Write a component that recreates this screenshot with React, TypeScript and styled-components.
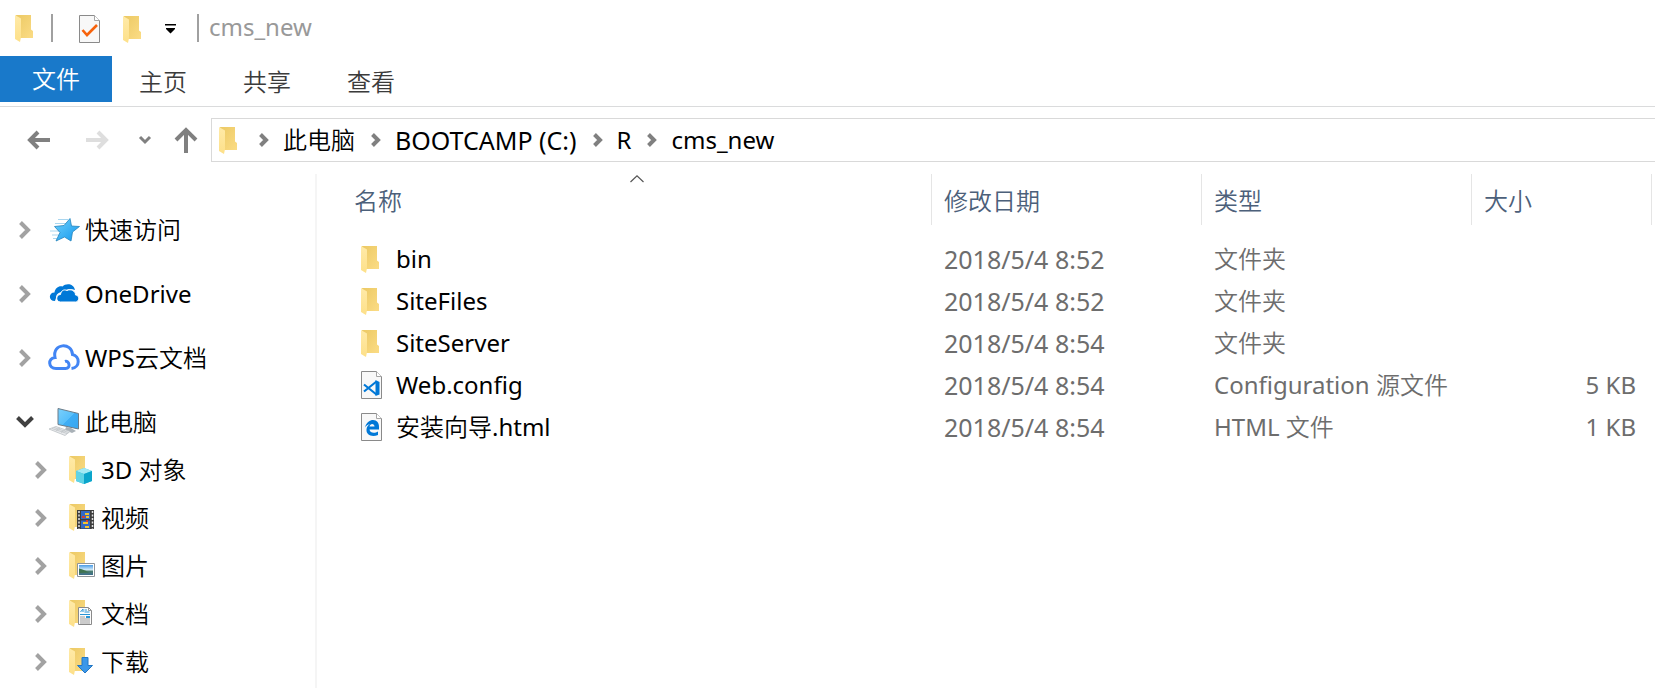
import React from "react";
import styled, { createGlobalStyle, css } from "styled-components";

const GlobalStyle = createGlobalStyle`
  * { box-sizing: border-box; }
  body {
    margin: 0;
    background: #fff;
    color: #000;
    font-family: "Noto Sans", "Noto Sans CJK SC DemiLight", "Noto Sans CJK SC", sans-serif;
    font-size: 24px;
    line-height: 32px;
  }
  button { padding: 0; border: 0; background: none; color: inherit; font: inherit; cursor: pointer; }
  a { color: inherit; text-decoration: none; }
  ul, ol { margin: 0; padding: 0; list-style: none; }
  svg { display: block; flex: none; overflow: visible; }
`;

const Window = styled.div`
  display: flex;
  flex-direction: column;
  min-height: 100vh;
`;

const TitleBar = styled.header`
  display: flex;
  align-items: center;
  height: 56px;
  padding-left: 15px;
`;

const QuickTools = styled.div`
  display: flex;
  align-items: center;
  gap: 22px;
  padding: 2px 20px 0 26px;
`;

const Divider = styled.span`
  width: 2px;
  height: 28px;
  margin-left: 17px;
  background: #a0a0a0;
  &:last-of-type { margin-left: 0; }
`;

const WindowTitle = styled.h1`
  margin: 0 0 2px 10px;
  color: #999;
  font-size: 24px;
  font-weight: 400;
`;

const Tabs = styled.nav`
  display: flex;
  height: 51px;
  border-bottom: 1px solid #dadbdc;
`;

const Tab = styled.button<{ $primary?: boolean }>`
  height: 50px;
  padding: 1px 29px 0 27px;
  color: #3b3b3b;
  font-weight: 350;
  ${(p) =>
    p.$primary &&
    css`
      height: 46px;
      padding: 0 32px;
      background: #1979ca;
      color: #fff;
    `}
`;

const NavBar = styled.div`
  display: flex;
  align-items: center;
  height: 55px;
  padding-top: 11px;
`;

const NavButtons = styled.div`
  display: flex;
  align-items: center;
  width: 211px;
  padding-left: 10px;
`;

const NavButton = styled.button<{ $width: number }>`
  display: flex;
  align-items: center;
  justify-content: center;
  width: ${(p) => p.$width}px;
  height: 44px;
`;

const AddressBar = styled.ol`
  display: flex;
  flex: 1;
  align-items: center;
  height: 44px;
  padding-left: 7px;
  border: 1px solid #d9d9d9;
  border-right: 0;
`;

const Crumb = styled.li<{ $root?: boolean }>`
  display: flex;
  align-items: center;
  gap: 14px;
  margin-right: ${(p) => (p.$root ? 21 : 16)}px;
  white-space: nowrap;
`;

const CrumbLink = styled.a<{ $drive?: boolean }>`
  font-size: ${(p) => (p.$drive ? 25 : 24)}px;
`;

const Body = styled.div`
  display: flex;
  flex: 1;
  padding-top: 12px;
`;

const Sidebar = styled.nav`
  flex: none;
  width: 317px;
  padding-top: 32px;
  border-right: 2px solid #f5f5f5;
`;

const Tree = styled.ul`
  display: flex;
  flex-direction: column;
  gap: 16px;
`;

const TreeRow = styled.div<{ $nested?: boolean }>`
  display: flex;
  align-items: center;
  gap: 13px;
  height: 48px;
  padding-left: ${(p) => (p.$nested ? 31 : 15)}px;
`;

const Expander = styled.button`
  display: flex;
  align-items: center;
  justify-content: center;
  width: 20px;
  height: 32px;
`;

const TreeLink = styled.a`
  display: flex;
  align-items: center;
  gap: 5px;
`;

const Main = styled.main`
  flex: 1;
  min-width: 0;
  padding: 0 3px 0 25px;
`;

const FileTable = styled.table`
  width: 100%;
  table-layout: fixed;
  border-collapse: collapse;
`;

const HeaderCell = styled.th<{ $width?: number }>`
  position: relative;
  width: ${(p) => (p.$width ? `${p.$width}px` : "auto")};
  padding: 0 0 13px;
  font-weight: 350;
`;

const HeaderButton = styled.button`
  display: block;
  width: 100%;
  height: 51px;
  padding: 2px 0 0 12px;
  border-right: 1px solid #e5e5e5;
  color: #4c607a;
  text-align: left;
`;

const SortMark = styled.span`
  position: absolute;
  top: 1px;
  left: calc(50% - 7px);
`;

const Cell = styled.td<{ $end?: boolean }>`
  height: 42px;
  padding: ${(p) => (p.$end ? "0 16px 0 0" : "0 0 0 12px")};
  color: #6d6d6d;
  text-align: ${(p) => (p.$end ? "right" : "left")};
  white-space: nowrap;
`;

const NameCell = styled(Cell)`
  padding-left: 19px;
  color: #000;
`;

const DateCell = styled(Cell)`
  font-size: 25px;
`;

const FileName = styled.a`
  display: flex;
  align-items: center;
  gap: 13px;
`;

const IconSlot = styled.span<{ $width: number }>`
  display: flex;
  flex: none;
  width: ${(p) => p.$width}px;
`;

const FolderShape = () => (
  <>
    <path d="M1 0H16V14.5L18 16V23H4Z" fill="url(#folderBack)" />
    <path d="M0 0 6 3.5V22L5 27 0 24Z" fill="url(#folderFlap)" />
  </>
);

const Folder = () => (
  <svg width="19" height="27" viewBox="0 0 19 27">
    <FolderShape />
  </svg>
);

const Gradients = () => (
  <svg width="0" height="0" aria-hidden="true">
    <defs>
      <linearGradient id="folderBack" x1="0" y1="0" x2="1" y2="1">
        <stop offset="0" stopColor="#ecc964" />
        <stop offset="1" stopColor="#fbdc85" />
      </linearGradient>
      <linearGradient id="folderFlap" x1="0" y1="0" x2="0" y2="1">
        <stop offset="0" stopColor="#ffeaa8" />
        <stop offset="1" stopColor="#fde089" />
      </linearGradient>
      <linearGradient id="starBlue" x1="0" y1="0" x2="1" y2="1">
        <stop offset="0" stopColor="#6fd0fb" />
        <stop offset="1" stopColor="#1398ee" />
      </linearGradient>
      <linearGradient id="screen" x1="0" y1="0" x2="1" y2="1">
        <stop offset="0" stopColor="#7bd0fb" />
        <stop offset="0.5" stopColor="#58bffa" />
        <stop offset="0.52" stopColor="#3eaef5" />
        <stop offset="1" stopColor="#37a5f0" />
      </linearGradient>
      <linearGradient id="photo" x1="0" y1="0" x2="0" y2="1">
        <stop offset="0" stopColor="#4a9be6" />
        <stop offset="0.5" stopColor="#d9effb" />
        <stop offset="0.6" stopColor="#4d7f6e" />
        <stop offset="1" stopColor="#3e6e8d" />
      </linearGradient>
    </defs>
  </svg>
);

const Page = ({ children }: { children?: React.ReactNode }) => (
  <svg width="22" height="28" viewBox="0 0 22 28">
    <path d="M.5.5H15.5L20.5 5.5V27.5H.5Z" fill="#f8f8f8" stroke="#8a8a8a" />
    <path d="M15.5.5V5.5H20.5" fill="#fff" stroke="#a5a5a5" />
    {children}
  </svg>
);

const Chevron = () => (
  <svg width="12" height="18" viewBox="0 0 12 18">
    <path d="M1.5 1.5 9 9 1.5 16.5" fill="none" stroke="#a2a2a2" strokeWidth="4" />
  </svg>
);

const ChevronOpen = () => (
  <svg width="18" height="12" viewBox="0 0 18 12">
    <path d="M1.5 1.5 9 9 16.5 1.5" fill="none" stroke="#404040" strokeWidth="4" />
  </svg>
);

const CrumbChevron = () => (
  <svg width="10" height="14" viewBox="0 0 10 14">
    <path d="M1.5 1.5 7 7 1.5 12.5" fill="none" stroke="#808080" strokeWidth="4" />
  </svg>
);

const Star = () => (
  <svg width="32" height="26" viewBox="0 0 32 26">
    <path d="M10 2.5H20M7 6.5H18M2 14H12M4 18H11M5 21.5H9" stroke="#a9d6ef" strokeWidth="1" />
    <path
      d="M22 1.500 23.500 9 31.500 9.500 24.500 15 23 24 16.500 20 8 24 12 15.500 6.500 9.500 16 8.500Z"
      fill="url(#starBlue)"
      stroke="#2584bd"
      strokeWidth=".8"
    />
  </svg>
);

const OneDrive = () => (
  <svg width="32" height="20" viewBox="0 0 32 20">
    <path
      d="M7 17C0 17 .5 8.500 6.500 8.500 7 4 11 1.500 14.500 2.500 18-1.500 26-.5 27 6 22 4 18 5 16 8 11 7.500 8 10 8 14Z"
      fill="#0078d7"
    />
    <path
      d="M12.500 18C7.500 18 7.500 10.500 12.500 10.500 13 6.500 16 5 19 6.500 23 4.500 27.500 7 27.500 11 32 11 31.500 18 27.500 18Z"
      fill="#0078d7"
      stroke="#fff"
      strokeWidth="1"
    />
  </svg>
);

const WpsCloud = () => (
  <svg width="32" height="26" viewBox="0 0 32 26" fill="none" stroke="#4285f4" strokeWidth="3">
    <path d="M17 16.500C21 15 23.500 23.500 17.500 23.500H8C0 23.500-.5 13 7 12.500 4-2 24-3 24.500 9.500 32 11 32.500 22.500 23.500 23.500" />
  </svg>
);

const Computer = () => (
  <svg width="32" height="28" viewBox="0 0 32 28">
    <path d="M18 19 23 20 28 23 24 25 17 22Z" fill="#a9b1b7" />
    <path d="M10 .5 30.500 5.500V21L10 16.500Z" fill="url(#screen)" stroke="#6c7b87" strokeWidth="1" />
    <path d="M1 21 8 18.500 22 23.500 17 27.500Z" fill="#e8eaec" stroke="#bcc1c5" strokeWidth=".8" />
    <path d="M4 20.500 19 25.500M6 19.500 20.500 24.500M8 22.500 12 20M13 24.500 17 22" stroke="#bcc1c5" strokeWidth=".8" />
  </svg>
);

const LibraryFolder = ({ children }: { children: React.ReactNode }) => (
  <svg width="32" height="28" viewBox="0 0 32 28">
    <g transform="translate(5 0)">
      <path d="M1 0H16V23H4Z" fill="url(#folderBack)" />
      <path d="M0 0 6 3.5V22L5 27 0 24Z" fill="url(#folderFlap)" />
    </g>
    {children}
  </svg>
);

const Objects3D = () => (
  <LibraryFolder>
    <path d="M12 15 20 12 28 15V25L20 28 12 25Z" fill="#35c3dd" />
    <path d="M12 15 20 12 28 15 20 18Z" fill="#a5e9f3" />
    <path d="M20 18 28 15V25L20 28Z" fill="#0ba5cb" />
    <path d="M12 15 20 18V28L12 25Z" fill="#5fd3e5" />
  </LibraryFolder>
);

const Videos = () => (
  <LibraryFolder>
    <path d="M13 6H30V25H13Z" fill="#3d3d3d" />
    <path d="M17 7H26V15H17ZM17 16.500H26V24.500H17Z" fill="#3269c4" />
    <path d="M21 9H25V11H21ZM22 12H25V14H22ZM19 18H24V20H19ZM21 22H25V24H21Z" fill="#f2c230" />
    <path d="M18 12H21V14H18ZM22 16H24V18H22Z" fill="#d8402c" />
    <path d="M15 7V25M28.500 7V25" stroke="#e2e2e2" strokeWidth="1.500" strokeDasharray="2 1.500" />
  </LibraryFolder>
);

const Pictures = () => (
  <LibraryFolder>
    <path d="M13.500 11.500H30.500V24.500H13.500Z" fill="#fff" stroke="#8f9499" />
    <path d="M15 13H29V23H15Z" fill="url(#photo)" />
    <path d="M15 16.500C19 17.500 22 19 25 20.500L15 21Z" fill="#3f7350" />
  </LibraryFolder>
);

const Documents = () => (
  <LibraryFolder>
    <path d="M14.500 7.500H24.500L27.500 10.500V24.500H14.500Z" fill="#fcfcfc" stroke="#8a8a8a" />
    <path d="M24.500 7.500V10.500H27.500" fill="none" stroke="#9a9a9a" />
    <path d="M16.500 12 19 9V12M20.500 10H23M20.500 12H25.500M16 14.500H26" fill="none" stroke="#2a95d5" />
    <path d="M16 17H21M16 19H26M16 21H26M16 23H26" stroke="#9b9b9b" />
    <path d="M22 16H26V18H22Z" fill="#2a95d5" />
  </LibraryFolder>
);

const Downloads = () => (
  <LibraryFolder>
    <path d="M18 9.500H24V17.500H28.500L21 25 13.500 17.500H18Z" fill="#3b97e8" stroke="#2377c4" />
  </LibraryFolder>
);

const CodeFile = () => (
  <Page>
    <path d="M14.500 9 18.500 11V23.500L14.500 25Z" fill="#0078d7" />
    <path d="M15.500 10.500 3 20.500M15.500 23.500 3 13.500" fill="none" stroke="#0078d7" strokeWidth="2.200" />
  </Page>
);

const EdgeFile = () => (
  <Page>
    <path
      d="M4 14.500C5.500 9 9 7 12 7 16 7 18 10 18 14V16.500H8.500C9 20.500 14 20.500 17 18.500V22C11 24.500 5 22 5.500 16.500 5.500 14 7 12 9 11 7 11.500 5 12.500 4 14.500ZM8.500 13.500H13.500C13.500 10 9 10 8.500 13.500Z"
      fill="#0078d7"
      fillRule="evenodd"
    />
  </Page>
);

const Arrow = ({ faded }: { faded?: boolean }) => (
  <svg width="22" height="18" viewBox="0 0 22 18">
    <path
      d={faded ? "M0 9H19M12 1 20 9 12 17" : "M22 9H3M10 1 2 9 10 17"}
      fill="none"
      stroke={faded ? "#dedede" : "#808080"}
      strokeWidth="4"
    />
  </svg>
);

interface Place {
  name: string;
  icon: React.ReactNode;
  children?: Place[];
}

const places: Place[] = [
  { name: "快速访问", icon: <Star /> },
  { name: "OneDrive", icon: <OneDrive /> },
  { name: "WPS云文档", icon: <WpsCloud /> },
  {
    name: "此电脑",
    icon: <Computer />,
    children: [
      { name: "3D 对象", icon: <Objects3D /> },
      { name: "视频", icon: <Videos /> },
      { name: "图片", icon: <Pictures /> },
      { name: "文档", icon: <Documents /> },
      { name: "下载", icon: <Downloads /> },
    ],
  },
];

const crumbs = [
  { label: "此电脑" },
  { label: "BOOTCAMP (C:)", drive: true },
  { label: "R" },
  { label: "cms_new" },
];

const files = [
  { name: "bin", icon: <Folder />, date: "2018/5/4 8:52", type: "文件夹", size: "" },
  { name: "SiteFiles", icon: <Folder />, date: "2018/5/4 8:52", type: "文件夹", size: "" },
  { name: "SiteServer", icon: <Folder />, date: "2018/5/4 8:54", type: "文件夹", size: "" },
  { name: "Web.config", icon: <CodeFile />, date: "2018/5/4 8:54", type: "Configuration 源文件", size: "5 KB" },
  { name: "安装向导.html", icon: <EdgeFile />, date: "2018/5/4 8:54", type: "HTML 文件", size: "1 KB" },
];

const columns = [
  { label: "名称", sorted: true },
  { label: "修改日期", width: 270 },
  { label: "类型", width: 270 },
  { label: "大小", width: 180 },
];

const TreeItem = ({ place, nested }: { place: Place; nested?: boolean }) => (
  <li>
    <TreeRow $nested={nested}>
      <Expander aria-label={place.name} aria-expanded={!!place.children}>
        {place.children ? <ChevronOpen /> : <Chevron />}
      </Expander>
      <TreeLink href="#">
        <IconSlot $width={32}>{place.icon}</IconSlot>
        {place.name}
      </TreeLink>
    </TreeRow>
    {place.children && (
      <ul>
        {place.children.map((child) => (
          <TreeItem key={child.name} place={child} nested />
        ))}
      </ul>
    )}
  </li>
);

export default function App() {
  return (
    <Window>
      <GlobalStyle />
      <TitleBar>
        <Folder />
        <Divider />
        <QuickTools>
          <button aria-label="属性">
            <Page>
              <path d="M3.500 15 8 20 18 10" fill="none" stroke="#f7630c" strokeWidth="2.600" />
            </Page>
          </button>
          <button aria-label="新建文件夹">
            <Folder />
          </button>
          <button aria-label="自定义快速访问工具栏">
            <svg width="13" height="10" viewBox="0 0 13 10">
              <path d="M1 0H12V1.500H1ZM2 4H11V5L6.500 9.500 2 5Z" fill="#000" />
            </svg>
          </button>
        </QuickTools>
        <Divider />
        <WindowTitle>cms_new</WindowTitle>
      </TitleBar>
      <Tabs>
        <Tab $primary>文件</Tab>
        <Tab>主页</Tab>
        <Tab>共享</Tab>
        <Tab>查看</Tab>
      </Tabs>
      <NavBar>
        <NavButtons>
          <NavButton $width={58} aria-label="后退">
            <Arrow />
          </NavButton>
          <NavButton $width={58} aria-label="前进" disabled>
            <Arrow faded />
          </NavButton>
          <NavButton $width={38} aria-label="最近位置">
            <svg width="12" height="8" viewBox="0 0 12 8">
              <path d="M1 1 6 6 11 1" fill="none" stroke="#808080" strokeWidth="3" />
            </svg>
          </NavButton>
          <NavButton $width={44} aria-label="向上">
            <svg width="22" height="25" viewBox="0 0 22 25">
              <path d="M11 25V3M1 12 11 2 21 12" fill="none" stroke="#808080" strokeWidth="4" />
            </svg>
          </NavButton>
        </NavButtons>
        <AddressBar>
          <Crumb $root>
            <Folder />
          </Crumb>
          {crumbs.map((crumb) => (
            <Crumb key={crumb.label}>
              <CrumbChevron />
              <CrumbLink href="#" $drive={crumb.drive}>
                {crumb.label}
              </CrumbLink>
            </Crumb>
          ))}
        </AddressBar>
      </NavBar>
      <Body>
        <Sidebar>
          <Tree>
            {places.map((place) => (
              <TreeItem key={place.name} place={place} />
            ))}
          </Tree>
        </Sidebar>
        <Main>
          <FileTable>
            <thead>
              <tr>
                {columns.map((column) => (
                  <HeaderCell key={column.label} $width={column.width}>
                    <HeaderButton>{column.label}</HeaderButton>
                    {column.sorted && (
                      <SortMark>
                        <svg width="14" height="8" viewBox="0 0 14 8">
                          <path d="M.5 7 7 .8 13.500 7" fill="none" stroke="#555" strokeWidth="1.200" />
                        </svg>
                      </SortMark>
                    )}
                  </HeaderCell>
                ))}
              </tr>
            </thead>
            <tbody>
              {files.map((file) => (
                <tr key={file.name}>
                  <NameCell>
                    <FileName href="#">
                      <IconSlot $width={22}>{file.icon}</IconSlot>
                      {file.name}
                    </FileName>
                  </NameCell>
                  <DateCell>{file.date}</DateCell>
                  <Cell>{file.type}</Cell>
                  <Cell $end>{file.size}</Cell>
                </tr>
              ))}
            </tbody>
          </FileTable>
        </Main>
      </Body>
      <Gradients />
    </Window>
  );
}
